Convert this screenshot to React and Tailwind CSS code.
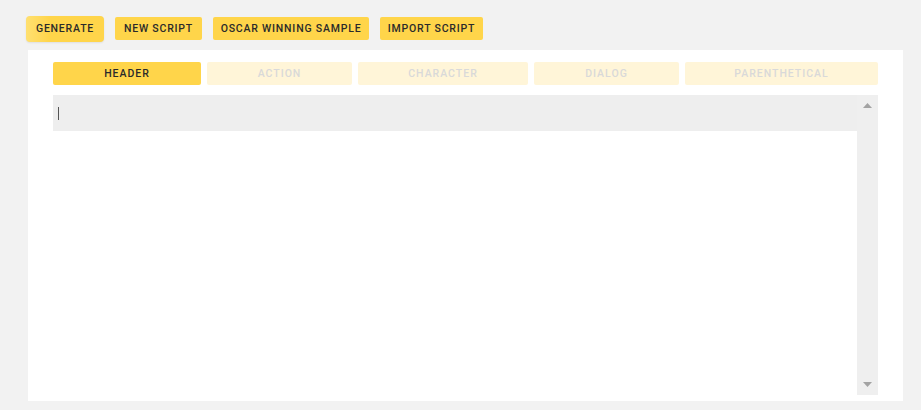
import React from 'react';

const topButtons = [
    { label: 'Generate', cls: 'w-[78px] h-[26px] mt-[-1px] bg-gradient-to-r from-[#ffe070] to-[#ffd54a] to-30% rounded-[4px] shadow-[0_1px_2px_rgba(0,0,0,0.08)]' },
    { label: 'New Script', cls: 'ml-[11px] w-[87px] h-[23px] rounded-[2px]' },
    { label: 'Oscar Winning Sample', cls: 'ml-[11px] w-[156px] h-[23px] rounded-[2px]' },
    { label: 'Import Script', cls: 'ml-[11px] w-[103px] h-[23px] rounded-[2px]' },
];

const tabs = [
    { label: 'Header', w: 'w-[148px]', active: true },
    { label: 'Action', w: 'w-[145px]' },
    { label: 'Character', w: 'w-[170px]' },
    { label: 'Dialog', w: 'w-[145px]' },
    { label: 'Parenthetical', w: 'w-[193px]' },
];

const font = { fontFamily: 'Roboto, "Liberation Sans", sans-serif' };

const App = () => {
    return (
        <div className="w-[921px] h-[410px] bg-[#f2f2f2] overflow-hidden" style={font}>
            {/* toolbar */}
            <div className="flex items-start pt-[17px] pl-[26px] h-[50px]">
                {topButtons.map(b => (
                    <button
                        key={b.label}
                        className={`flex shrink-0 items-center justify-center bg-[#ffd54a] text-[#2a2a2a] text-[10.5px] font-medium uppercase tracking-[0.8px] ${b.cls}`}
                    >
                        {b.label}
                    </button>
                ))}
            </div>

            {/* editor panel */}
            <div className="ml-[28px] w-[875px] h-[351px] bg-white pt-[12px] pl-[25px]">
                <div className="flex gap-[6px]">
                    {tabs.map(t => (
                        <div
                            key={t.label}
                            className={`${t.w} h-[23px] flex items-center justify-center rounded-[2px] text-[10.5px] font-medium uppercase tracking-[1px] ${t.active ? 'bg-[#ffd54a] text-[#2a2a2a]' : 'bg-[#fff5d8] text-[#d9d9d9]'}`}
                        >
                            {t.label}
                        </div>
                    ))}
                </div>

                <div className="flex mt-[10px] w-[825px] h-[300px]">
                    <div className="flex-1">
                        <div className="h-[36px] bg-[#eeeeee] flex items-center pl-[5px]">
                            <div className="w-px h-[13px] bg-[#555]" />
                        </div>
                    </div>
                    <div className="w-[21px] bg-[#efefef] flex flex-col items-center justify-between py-[8px]">
                        <svg width="9" height="5" viewBox="0 0 9 5"><path d="M4.5 0L9 5H0z" fill="#a3a3a3" /></svg>
                        <svg width="9" height="5" viewBox="0 0 9 5"><path d="M0 0h9L4.5 5z" fill="#a3a3a3" /></svg>
                    </div>
                </div>
            </div>
        </div>
    );
};

export default App;
